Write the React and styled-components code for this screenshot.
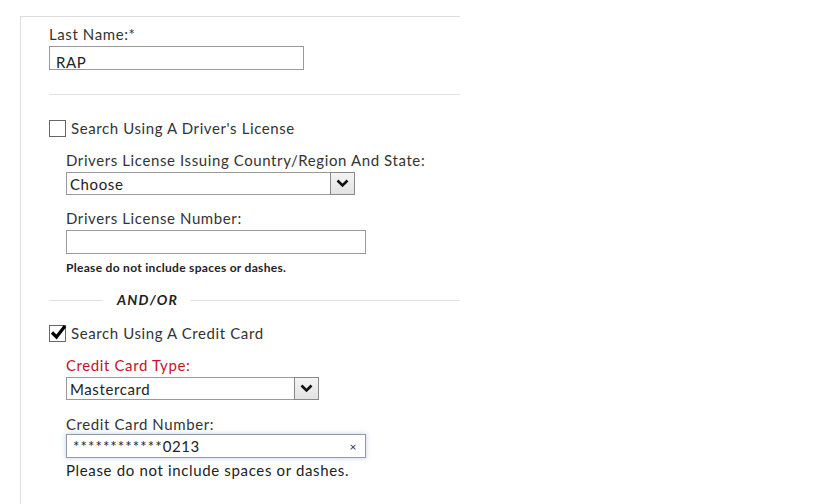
import React from "react";
import styled, { createGlobalStyle } from "styled-components";

const GlobalStyle = createGlobalStyle`
  html, body {
    margin: 0;
    padding: 0;
    background: #ffffff;
  }
  body {
    font-family: Lato, "Open Sans", sans-serif;
    color: #333333;
    letter-spacing: 0.6px;
  }
`;

const Page = styled.div`
  width: 819px;
  height: 504px;
  overflow: hidden;
  padding-top: 16px;
  padding-left: 20px;
  box-sizing: border-box;
`;

const Panel = styled.div`
  width: 440px;
  height: 500px;
  border-top: 1px solid #dcdcdc;
  border-left: 1px solid #dcdcdc;
  padding-left: 28px;
  box-sizing: border-box;
`;

const Field = styled.div`
  display: flex;
  flex-direction: column;
  margin-top: ${(p) => p.top || 0}px;
`;

const Label = styled.label`
  font-size: 15px;
  line-height: 18px;
  color: ${(p) => (p.error ? "#c8102e" : "#333333")};
  margin-bottom: ${(p) => (p.tight ? 1 : 3)}px;
`;

const TextBox = styled.div`
  position: relative;
  width: ${(p) => p.w}px;
  height: 24px;
  border: 1px solid #999999;
  box-sizing: border-box;
  font-size: 15px;
  line-height: 18px;
  color: #222;
  display: flex;
  align-items: ${(p) => (p.low ? "flex-end" : "center")};
  padding-left: 6px;
  overflow: hidden;
  box-shadow: ${(p) => (p.focus ? "0 0 4px 1px rgba(120,160,220,0.35)" : "none")};
`;

const LowText = styled.span`
  margin-bottom: -2px;
`;

const Masked = styled.span`
  letter-spacing: 1.1px;
`;

const Clear = styled.span`
  position: absolute;
  right: 8px;
  top: 3px;
  font-size: 12px;
  color: #333;
`;

const Divider = styled.div`
  height: 1px;
  background: #e2e2e2;
  margin-top: ${(p) => p.top}px;
`;

const CheckRow = styled.div`
  display: flex;
  align-items: center;
  gap: 5px;
  margin-top: ${(p) => p.top}px;
  font-size: 15px;
  line-height: 19px;
  color: #333;
`;

const Box = styled.span`
  width: 17px;
  height: 17px;
  box-sizing: border-box;
  border: 1px solid #666;
  background: #fff;
  display: inline-flex;
  align-items: center;
  justify-content: center;
  position: relative;
`;

const Sub = styled.div`
  padding-left: 17px;
`;

const SelectBox = styled.div`
  width: ${(p) => p.w}px;
  height: 23px;
  border: 1px solid #999;
  box-sizing: border-box;
  display: flex;
  align-items: stretch;
  font-size: 15px;
  color: #222;
`;

const SelectText = styled.span`
  flex: 1;
  display: flex;
  align-items: center;
  padding-left: 3px;
`;

const Arrow = styled.span`
  width: 23px;
  margin: -1px -1px -1px 0;
  border: 1px solid #888;
  background: linear-gradient(#f4f4f4, #e2e2e2);
  display: flex;
  align-items: center;
  justify-content: center;
`;

const Note = styled.div`
  font-size: ${(p) => (p.small ? 12 : 15)}px;
  line-height: ${(p) => (p.small ? 14 : 18)}px;
  font-weight: ${(p) => (p.small ? 700 : 400)};
  letter-spacing: ${(p) => (p.small ? 0.3 : 0.65)}px;
  color: #222;
  margin-top: ${(p) => (p.small ? 7 : 3)}px;
`;

const OrRow = styled.div`
  display: flex;
  align-items: center;
  margin-top: ${(p) => p.top}px;
`;

const OrLine = styled.span`
  height: 1px;
  background: #e2e2e2;
  width: ${(p) => (p.w ? p.w + "px" : "auto")};
  flex: ${(p) => (p.w ? "none" : 1)};
`;

const OrText = styled.span`
  font-size: 14px;
  line-height: 18px;
  font-weight: 700;
  font-style: italic;
  letter-spacing: 1.2px;
  color: #222;
  margin: 0 12px 0 14px;
`;

const TickMark = styled.svg`
  position: absolute;
  left: 0;
  top: -3px;
`;

function Chevron() {
  return (
    <svg width="13" height="9" viewBox="0 0 13 9">
      <path d="M1.5 1.5 L6.5 6.5 L11.5 1.5" fill="none" stroke="#111" strokeWidth="2.6" />
    </svg>
  );
}

function Tick() {
  return (
    <TickMark width="17" height="17" viewBox="0 0 17 17">
      <path d="M2 9.5 L6.5 14 L15 3" fill="none" stroke="#000" strokeWidth="3.2" />
    </TickMark>
  );
}

function Select({ w, value }) {
  return (
    <SelectBox w={w}>
      <SelectText>{value}</SelectText>
      <Arrow>
        <Chevron />
      </Arrow>
    </SelectBox>
  );
}

export default function App() {
  return (
    <>
      <GlobalStyle />
      <Page>
        <Panel>
          <Field top={8}>
            <Label>Last Name:*</Label>
            <TextBox w={255} low>
              <LowText>RAP</LowText>
            </TextBox>
          </Field>

          <Divider top={24} />

          <CheckRow top={24}>
            <Box />
            Search Using A Driver's License
          </CheckRow>

          <Sub>
            <Field top={13}>
              <Label>Drivers License Issuing Country/Region And State:</Label>
              <Select w={289} value="Choose" />
            </Field>
            <Field top={14}>
              <Label>Drivers License Number:</Label>
              <TextBox w={300} />
              <Note small>Please do not include spaces or dashes.</Note>
            </Field>
          </Sub>

          <OrRow top={16}>
            <OrLine w={54} />
            <OrText>AND/OR</OrText>
            <OrLine />
          </OrRow>

          <CheckRow top={15}>
            <Box>
              <Tick />
            </Box>
            Search Using A Credit Card
          </CheckRow>

          <Sub>
            <Field top={13}>
              <Label error>Credit Card Type:</Label>
              <Select w={253} value="Mastercard" />
            </Field>
            <Field top={15}>
              <Label tight>Credit Card Number:</Label>
              <TextBox w={300} focus>
                <Masked>************</Masked>0213
                <Clear>×</Clear>
              </TextBox>
              <Note>Please do not include spaces or dashes.</Note>
            </Field>
          </Sub>
        </Panel>
      </Page>
    </>
  );
}
